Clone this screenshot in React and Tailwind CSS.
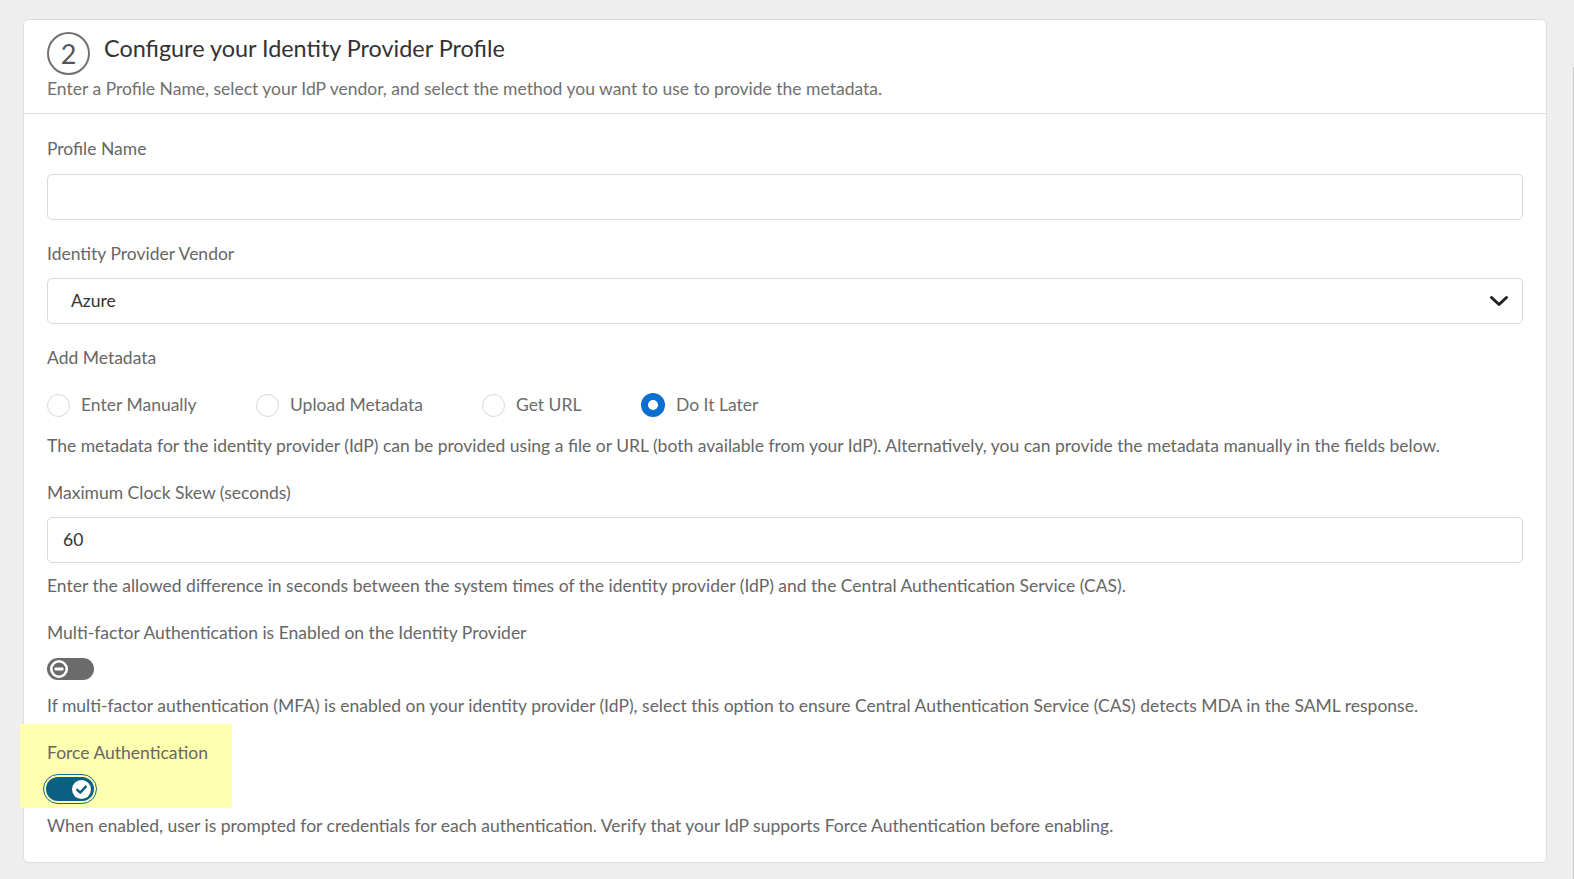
import React from "react";

function Radio({ label, checked, className = "" }) {
  return (
    <label className={`flex items-center ${className}`}>
      {checked ? (
        <span className="w-[24px] h-[24px] rounded-full border-[7px] border-[#0a70d0] bg-white shrink-0" />
      ) : (
        <span className="w-[23px] h-[23px] rounded-full border border-[#d6d6d6] bg-white shrink-0" />
      )}
      <span className="ml-[11px] text-[17.5px] text-[#6b6b6b]">{label}</span>
    </label>
  );
}

function ToggleOff() {
  return (
    <div className="w-[47px] h-[22px] rounded-full bg-[#6b6b6b] flex items-center pl-[3px]">
      <svg width="18" height="18" viewBox="0 0 18 18">
        <circle cx="9" cy="9" r="9" fill="#ffffff" />
        <circle cx="9" cy="9" r="6.5" fill="#6b6b6b" />
        <rect x="4.5" y="7.6" width="9" height="2.8" rx="1" fill="#ffffff" />
      </svg>
    </div>
  );
}

function ToggleOn() {
  return (
    <div className="w-[54px] h-[30px] rounded-full border-[1.5px] border-[#0f6c8c] p-[2px] -ml-[4px]">
      <div className="w-full h-full rounded-full bg-[#0b5f80] flex items-center justify-end pr-[3px]">
        <svg width="19" height="19" viewBox="0 0 19 19">
          <circle cx="9.5" cy="9.5" r="9.5" fill="#ffffff" />
          <path d="M5.2 9.8 L8.2 12.6 L13.8 6.6" stroke="#0b5f80" strokeWidth="2.4" fill="none" strokeLinecap="round" strokeLinejoin="round" />
        </svg>
      </div>
    </div>
  );
}

export default function App() {
  return (
    <div
      className="min-h-screen bg-[#eeeeee] pt-[19px] pl-[23px] pr-[27px] pb-[17px] relative"
      style={{ fontFamily: "Lato, 'Open Sans', sans-serif" }}
    >
      <div className="absolute right-0 top-[67px] bottom-0 w-[1px] bg-[#c8c8c8]" />
      <div className="bg-white border border-[#dedede] rounded-[6px]">
        {/* Header */}
        <div className="px-[23px] pt-[12px] pb-[12px] border-b border-[#dedede]">
          <div className="flex items-center">
            <div className="w-[43px] h-[43px] rounded-full border-[2.5px] border-[#6e7276] flex items-center justify-center text-[27px] text-[#555] leading-none pb-[1px]">
              2
            </div>
            <h1 className="ml-[14px] text-[23.4px] text-[#333] leading-[30px] -mt-[11px]">
              Configure your Identity Provider Profile
            </h1>
          </div>
          <p className="text-[17.5px] text-[#707070] leading-[24px] mt-[2px]">
            Enter a Profile Name, select your IdP vendor, and select the method you want to use to provide the metadata.
          </p>
        </div>

        {/* Body */}
        <div className="px-[23px] pt-[23px] pb-[24px] text-[17.5px] leading-[24px]">
          <div className="text-[#666]">Profile Name</div>
          <div className="mt-[13px] h-[46px] rounded-[5px] border border-[#d9d9d9]" />

          <div className="mt-[22px] text-[#666]">Identity Provider Vendor</div>
          <div className="mt-[12px] h-[46px] rounded-[5px] border border-[#d9d9d9] flex items-center justify-between pl-[23px] pr-[13px]">
            <span className="text-[#333]">Azure</span>
            <svg width="20" height="14" viewBox="0 0 20 14">
              <path d="M2.5 3.5 L10 10.5 L17.5 3.5" stroke="#222" strokeWidth="3" fill="none" strokeLinecap="round" strokeLinejoin="round" />
            </svg>
          </div>

          <div className="mt-[22px] text-[#666]">Add Metadata</div>
          <div className="mt-[23px] flex items-center">
            <Radio label="Enter Manually" className="w-[209px]" />
            <Radio label="Upload Metadata" className="w-[226px]" />
            <Radio label="Get URL" className="w-[159px]" />
            <Radio label="Do It Later" checked />
          </div>
          <p className="mt-[17px] text-[#666]">
            The metadata for the identity provider (IdP) can be provided using a file or URL (both available from your IdP). Alternatively, you can provide the metadata manually in the fields below.
          </p>

          <div className="mt-[23px] text-[#666]">Maximum Clock Skew (seconds)</div>
          <div className="mt-[12px] h-[46px] rounded-[5px] border border-[#d9d9d9] flex items-center pl-[15px] text-[#333]">
            60
          </div>
          <p className="mt-[11px] text-[#666]">
            Enter the allowed difference in seconds between the system times of the identity provider (IdP) and the Central Authentication Service (CAS).
          </p>

          <div className="mt-[23px] text-[#666]">Multi-factor Authentication is Enabled on the Identity Provider</div>
          <div className="mt-[13px]">
            <ToggleOff />
          </div>
          <p className="mt-[14px] text-[#666]">
            If multi-factor authentication (MFA) is enabled on your identity provider (IdP), select this option to ensure Central Authentication Service (CAS) detects MDA in the SAML response.
          </p>

          <div className="mt-[6px] -ml-[27px] w-[212px] h-[84px] bg-[#ffffb0] pl-[27px] pt-[17px]">
            <div className="text-[#666]">Force Authentication</div>
            <div className="mt-[9px]">
              <ToggleOn />
            </div>
          </div>
          <p className="mt-[6px] text-[#666]">
            When enabled, user is prompted for credentials for each authentication. Verify that your IdP supports Force Authentication before enabling.
          </p>
        </div>
      </div>
    </div>
  );
}
